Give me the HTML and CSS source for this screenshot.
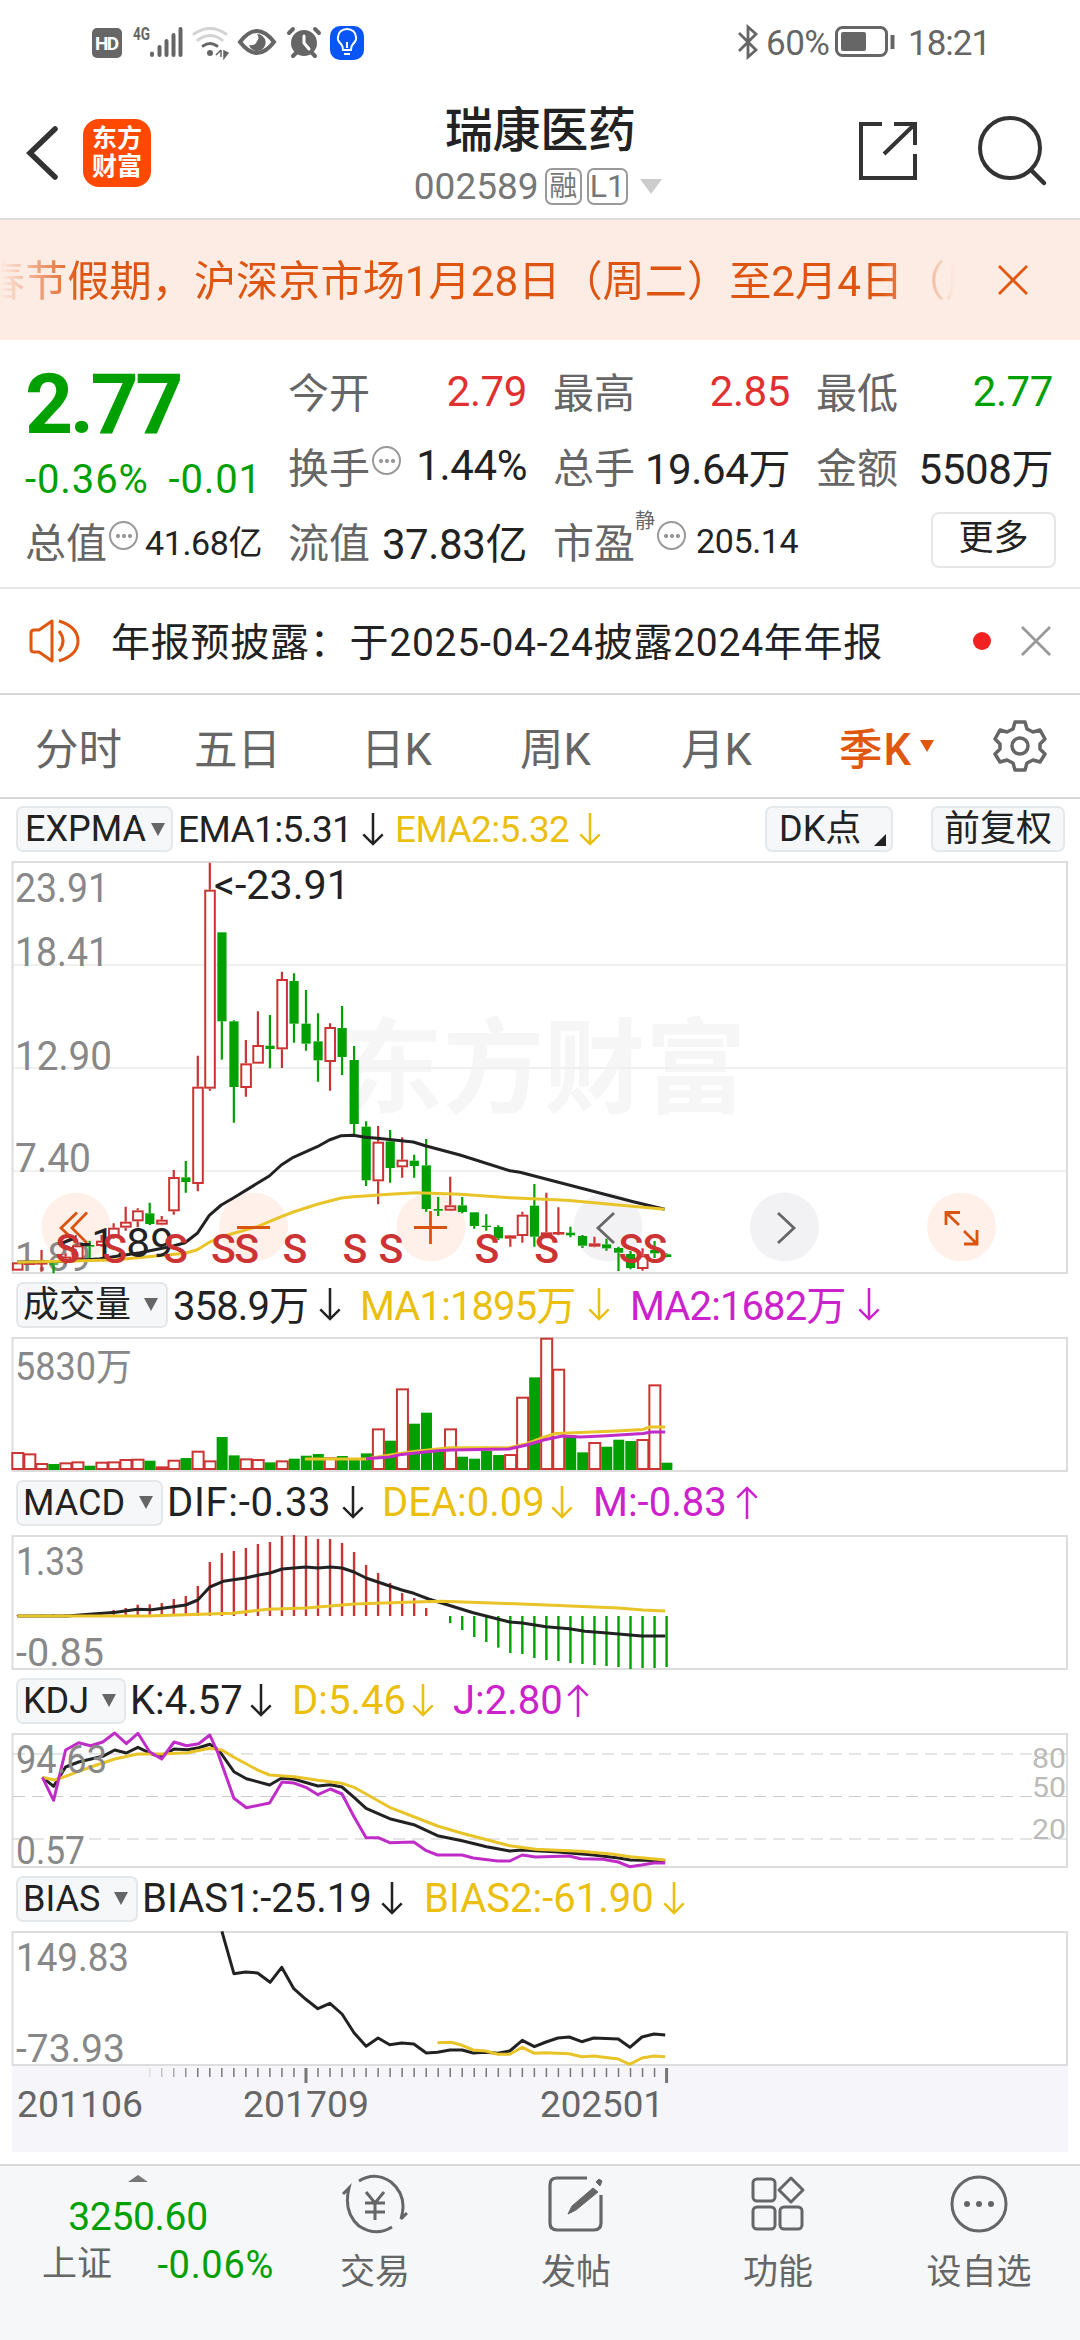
FILE: index.html
```
<!DOCTYPE html>
<html lang="zh-CN">
<head>
<meta charset="utf-8">
<title>瑞康医药 002589</title>
<link rel="stylesheet" href="styles.css">
</head>
<body>
<div class="status">
	<svg class="status-left" width="290" height="40" viewBox="84 22 290 40">
		<rect x="92" y="28" width="30" height="30" rx="5" fill="#666"/>
		<text x="95" y="50" class="hd" textLength="24">HD</text>
		<text x="133" y="40" class="net" textLength="17" lengthAdjust="spacingAndGlyphs">4G</text>
		<path d="M152 53.5v1.5M159.500 47v8M166.500 41v14M173.500 35v20M180.500 29v26" stroke="#666" stroke-width="4" stroke-linecap="round" fill="none"/>
		<g fill="none" stroke-width="3" stroke-linecap="round">
			<path d="M194 34q16 -11 32 0M198 40q12 -9 24 0" stroke="#d3d3d3"/>
			<path d="M203 46q7 -5 14 0" stroke="#666"/>
		</g>
		<circle cx="210" cy="53" r="3" fill="#666"/>
		<path d="M221 50v7M216 55l5 -5M224 51v7l4 -5z" stroke="#666" stroke-width="1.500" fill="#666"/>
		<path d="M240 42q17 -22 34 0q-17 22 -34 0z" fill="none" stroke="#666" stroke-width="4"/>
		<path d="M257 34a8.500 8.500 0 1 1 -8 11q7 1 8 -4q3 -3 0 -7z" fill="#666"/>
		<circle cx="304" cy="43" r="13" fill="#666"/>
		<path d="M289 33l4 -4M319 33l-4 -4M293 56l4 -4M315 56l-4 -4" stroke="#666" stroke-width="4" stroke-linecap="round"/>
		<path d="M304 36v7l5 6" stroke="#fff" stroke-width="3" fill="none" stroke-linecap="round"/>
		<rect x="330" y="26" width="34" height="34" rx="10" fill="#0a55f5"/>
		<path d="M343 50q0 -4 -2 -6q-4 -4 -3 -7a9 8 0 0 1 18 0q1 3 -3 7q-2 2 -2 6zM344 54h6M347 42v6" stroke="#fff" stroke-width="2" fill="none"/>
	</svg>
	<div class="status-right">
		<svg width="24" height="36" viewBox="0 0 24 36"><path d="M3 9l17 17l-8 7v-30l8 7l-17 17" fill="none" stroke="#666" stroke-width="2.800"/></svg>
		<span class="battery-text">60%</span>
		<svg width="62" height="32" viewBox="0 0 62 32">
			<rect x="1.500" y="1.500" width="50" height="28" rx="6" fill="none" stroke="#666" stroke-width="3"/>
			<rect x="6" y="6" width="25" height="19" rx="2" fill="#666"/>
			<path d="M57.500 9v14" stroke="#666" stroke-width="4"/>
		</svg>
		<span class="clock">18:21</span>
	</div>
</div>

<div class="header">
	<svg class="back" width="36" height="60" viewBox="0 0 36 60"><path d="M33 6L8 30l25 24" fill="none" stroke="#333" stroke-width="5.500" stroke-linecap="round"/></svg>
	<div class="logo"><span>东方</span><span>财富</span></div>
	<div class="title">
		<div class="name">瑞康医药</div>
		<div class="code"><span class="num">002589</span><span class="tag">融</span><span class="tag l1">L1</span><i class="down"></i></div>
	</div>
	<svg class="share" width="62" height="62" viewBox="0 0 62 62"><path d="M25 4H4v54h54V34M37 4h21v21M58 4L27 34" fill="none" stroke="#333" stroke-width="4"/></svg>
	<svg class="search" width="72" height="72" viewBox="0 0 72 72"><circle cx="33" cy="33" r="30" fill="none" stroke="#333" stroke-width="4"/><path d="M54 55l13 13" stroke="#333" stroke-width="4.500" stroke-linecap="round"/></svg>
</div>

<div class="notice">
	<div class="marquee">春节假期，沪深京市场1月28日（周二）至2月4日（周二）休市</div>
	<svg width="30" height="30" viewBox="0 0 30 30"><path d="M1 1l28 28M29 1L1 29" stroke="#e0570f" stroke-width="2.800"/></svg>
</div>

<div class="quote">
	<div class="price">2.77</div>
	<div class="cell"><label>今开</label><b class="red">2.79</b></div>
	<div class="cell"><label>最高</label><b class="red">2.85</b></div>
	<div class="cell"><label>最低</label><b class="green">2.77</b></div>
	<div class="change"><span>-0.36%</span><span>-0.01</span></div>
	<div class="cell"><label>换手<i class="more-dot"></i></label><b>1.44%</b></div>
	<div class="cell"><label>总手</label><b>19.64万</b></div>
	<div class="cell"><label>金额</label><b>5508万</b></div>
	<div class="cell"><label>总值<i class="more-dot"></i></label><b class="small">41.68亿</b></div>
	<div class="cell"><label>流值</label><b>37.83亿</b></div>
	<div class="cell"><label>市盈<sup>静</sup><i class="more-dot"></i></label><b class="small">205.14</b></div>
	<div class="cell end"><div class="more-btn">更多</div></div>
</div>

<div class="news">
	<svg width="52" height="46" viewBox="0 0 52 46" fill="none" stroke="#e0570f" stroke-width="3">
		<path d="M10 12h-5q-3 0 -3 3v16q0 3 3 3h5L23 43V3zM30 13q8 10 0 20M30 3q19 6 19 20t-19 20" stroke-linejoin="round"/>
	</svg>
	<div class="news-text">年报预披露：于2025-04-24披露2024年年报</div>
	<i class="dot"></i>
	<svg width="30" height="30" viewBox="0 0 30 30"><path d="M1 1l28 28M29 1L1 29" stroke="#999" stroke-width="2.800"/></svg>
</div>

<div class="tabs">
	<span>分时</span><span>五日</span><span>日K</span><span>周K</span><span>月K</span>
	<span class="on">季K<i></i></span>
	<svg width="54" height="54" viewBox="0 0 54 54" fill="none" stroke="#666" stroke-width="3.500" stroke-linejoin="round">
		<path d="M22 3h10l2 7l6 3l7 -2l5 9l-5 5v5l5 5l-5 8l-7 -2l-6 3l-2 7h-10l-2 -7l-6 -3l-7 2l-5 -8l5 -5v-5l-5 -5l5 -9l7 2l6 -3z"/><circle cx="27" cy="27" r="8"/>
	</svg>
</div>

<div class="bar bar-main">
	<div class="pick">EXPMA<i></i></div>
	<div class="read"><span>EMA1:5.31</span><svg class="arrow"><use href="#down"/></svg></div>
	<div class="read yellow"><span>EMA2:5.32</span><svg class="arrow"><use href="#down"/></svg></div>
	<div class="pick dk">DK点<i></i></div>
	<div class="pick fq">前复权</div>
</div>
<svg class="chart" id="kline" width="1056" height="413"></svg>

<div class="bar bar-vol">
	<div class="pick">成交量<i></i></div>
	<div class="read"><span>358.9万</span><svg class="arrow"><use href="#down"/></svg></div>
	<div class="read yellow"><span>MA1:1895万</span><svg class="arrow"><use href="#down"/></svg></div>
	<div class="read purple"><span>MA2:1682万</span><svg class="arrow"><use href="#down"/></svg></div>
</div>
<svg class="chart" id="vol" width="1056" height="135"></svg>

<div class="bar bar-macd">
	<div class="pick">MACD<i></i></div>
	<div class="read"><span>DIF:-0.33</span><svg class="arrow"><use href="#down"/></svg></div>
	<div class="read yellow"><span>DEA:0.09</span><svg class="arrow"><use href="#down"/></svg></div>
	<div class="read purple"><span>M:-0.83</span><svg class="arrow"><use href="#up"/></svg></div>
</div>
<svg class="chart" id="macd" width="1056" height="135"></svg>

<div class="bar bar-kdj">
	<div class="pick">KDJ<i></i></div>
	<div class="read"><span>K:4.57</span><svg class="arrow"><use href="#down"/></svg></div>
	<div class="read yellow"><span>D:5.46</span><svg class="arrow"><use href="#down"/></svg></div>
	<div class="read purple"><span>J:2.80</span><svg class="arrow"><use href="#up"/></svg></div>
</div>
<svg class="chart" id="kdj" width="1056" height="135"></svg>

<div class="bar bar-bias">
	<div class="pick">BIAS<i></i></div>
	<div class="read"><span>BIAS1:-25.19</span><svg class="arrow"><use href="#down"/></svg></div>
	<div class="read yellow"><span>BIAS2:-61.90</span><svg class="arrow"><use href="#down"/></svg></div>
</div>
<svg class="chart" id="bias" width="1056" height="135"></svg>
<svg class="chart axis" id="axis" width="1056" height="86"></svg>

<div class="footer">
	<div class="index">
		<i></i>
		<div class="index-value">3250.60</div>
		<div class="index-row"><span>上证</span><em>-0.06%</em></div>
	</div>
	<div class="item">
		<svg width="66" height="60" viewBox="0 0 66 60" fill="none" stroke="#666" stroke-width="3">
			<path d="M17 7Q33 -3 49 8Q66 22 59 45L65 39M50 53Q34 63 17 52Q1 38 7 14L1 20"/>
			<path d="M24 18l9 11l9 -11M23 29h20M23 38h20M33 29v17"/>
		</svg>
		<span>交易</span>
	</div>
	<div class="item">
		<svg width="58" height="60" viewBox="0 0 58 60" fill="none" stroke="#666" stroke-width="3.200">
			<path d="M40 4H10q-7 0 -7 7v38q0 7 7 7h37q7 0 7 -7V21"/>
			<path d="M46 14l5 4L29 36l-8 4l4 -8zM49 8l3 -3l3 2l-2 5z" fill="#666" stroke-width="1"/>
		</svg>
		<span>发帖</span>
	</div>
	<div class="item">
		<svg width="56" height="60" viewBox="0 0 56 60" fill="none" stroke="#666" stroke-width="3">
			<rect x="3" y="5" width="22" height="22" rx="4"/><rect x="3" y="33" width="22" height="22" rx="4"/><rect x="30" y="33" width="22" height="22" rx="4"/>
			<path d="M41 4l12 12l-12 12l-12 -12z" stroke-linejoin="round"/>
		</svg>
		<span>功能</span>
	</div>
	<div class="item">
		<svg width="58" height="60" viewBox="0 0 58 60">
			<circle cx="29" cy="30" r="27" fill="none" stroke="#666" stroke-width="3"/>
			<g fill="#666"><circle cx="17" cy="30" r="3"/><circle cx="29" cy="30" r="3"/><circle cx="41" cy="30" r="3"/></g>
		</svg>
		<span>设自选</span>
	</div>
</div>

<svg class="defs" width="0" height="0">
	<symbol id="down" viewBox="0 0 22 34"><path d="M11 0v32M1 22l10 10l10 -10" fill="none" stroke="currentColor" stroke-width="2.600"/></symbol>
	<symbol id="up" viewBox="0 0 22 34"><path d="M11 34v-32M1 12l10 -10l10 10" fill="none" stroke="currentColor" stroke-width="2.600"/></symbol>
</svg>
<script src="chart.js"></script>
</body>
</html>
```
FILE: styles.css
```
* {box-sizing: border-box;}
body {
	margin: 0;
	width: 1080px;
	height: 2340px;
	overflow: hidden;
	background: #fff;
	color: #222;
	font-family: Roboto, "Noto Sans CJK SC", sans-serif;
}
i, em {font-style: normal;}
svg {display: block; flex: none;}
.defs {position: absolute;}

/* status bar */
.status {
	display: flex;
	justify-content: space-between;
	height: 84px;
	padding: 22px 88px 0 84px;
}
.hd {font: bold 19px Roboto; fill: #fff;}
.net {font: bold 18px Roboto; fill: #666;}
.status-right {display: flex; align-items: center; height: 40px; color: #666; font-size: 35px;}
.status-right span {position: relative; top: 1px;}
.battery-text {width: 75px; padding-left: 6px; letter-spacing: -.5px;}
.clock {width: 84px; margin-left: 11px; letter-spacing: -1px;}

/* header */
.header {
	display: flex;
	align-items: center;
	height: 136px;
	padding: 0 31px 0 22px;
	border-bottom: 2px solid #ddd;
}
.back {margin-top: 3px;}
.logo {
	display: flex;
	flex-direction: column;
	justify-content: center;
	align-items: center;
	width: 68px;
	height: 68px;
	margin: 3px 0 0 25px;
	border-radius: 16px;
	background: #ff4800;
	color: #fff;
	font-size: 25px;
	font-weight: 700;
	line-height: 28px;
}
.title {width: 300px; margin-left: 243px;}
.name {height: 70px; padding-left: 51px; font-size: 48px; line-height: 81px; font-weight: 500; letter-spacing: -.3px;}
.code {display: flex; align-items: center; height: 52px; padding-left: 20px; color: #777;}
.code .num {width: 131px; font-size: 37px;}
.tag {
	width: 37px;
	height: 37px;
	border: 2px solid #999;
	border-radius: 7px;
	font-size: 28px;
	line-height: 33px;
	text-align: center;
}
.l1 {width: 41px; margin-left: 5px; font-size: 32px;}
.down {margin-left: 12px; border: 11px solid transparent; border-top: 15px solid #ccc; border-bottom: 0;}
.share {margin: 0 58px 0 164px;}

.notice {
	display: flex;
	align-items: center;
	justify-content: space-between;
	height: 120px;
	padding-right: 52px;
	background: #fdece4;
}
.marquee {
	width: 960px;
	margin-top: -5px;
	overflow: hidden;
	text-indent: -17px;
	white-space: nowrap;
	color: #dd5510;
	font-size: 42.200px;
	-webkit-mask-image: linear-gradient(90deg, transparent, #000 80px, #000 880px, transparent 955px);
	mask-image: linear-gradient(90deg, transparent, #000 80px, #000 880px, transparent 955px);
}

/* quote grid */
.quote {
	display: grid;
	grid-template-columns: 237px 239px 237px 237px;
	grid-template-rows: 75px 75px 75px;
	column-gap: 26px;
	height: 249px;
	padding: 13px 25px 0;
	border-bottom: 2px solid #e8e8e8;
}
.price {font-size: 84px; font-weight: 700; line-height: 104px; color: #00a000; letter-spacing: -3.500px;}
.change {display: flex; justify-content: space-between; padding: 14px 0 0 0; font-size: 40px; line-height: 76px; color: #00a000; letter-spacing: .9px;}
.cell {display: flex; justify-content: space-between; align-items: center; white-space: nowrap;}
.cell label {display: flex; align-items: center; color: #666; font-size: 41px; margin-top: -2px;}
.cell b {font-weight: 400; font-size: 42px; color: #222; letter-spacing: -.4px;}
.cell b.small {font-size: 34px;}
.cell b.red {color: #e03030; margin-top: 2px;}
.cell b.green {color: #00a000; margin-top: 2px;}
.cell.end {justify-content: flex-end;}
.cell sup {align-self: flex-start; font-size: 20px; line-height: 20px; margin-top: 1px;}
.cell sup + .more-dot {margin-right: 10px;}
.more-dot {
	width: 29px;
	height: 29px;
	margin: -8px 0 0 2px;
	border: 2px solid #999;
	border-radius: 50%;
	background: radial-gradient(circle at 50% 50%, #999 1.800px, transparent 2.300px) 3.500px 50% / 6px 6px no-repeat,
		radial-gradient(circle at 50% 50%, #999 1.800px, transparent 2.300px) 9.500px 50% / 6px 6px no-repeat,
		radial-gradient(circle at 50% 50%, #999 1.800px, transparent 2.300px) 15.500px 50% / 6px 6px no-repeat;
}
.more-btn {
	width: 125px;
	height: 56px;
	margin: -1px -3px 0 0;
	border: 2px solid #e6e6e6;
	border-radius: 8px;
	font-size: 35px;
	line-height: 50px;
	text-align: center;
}

.news {
	display: flex;
	align-items: center;
	height: 106px;
	padding: 0 28px 0 29px;
	border-bottom: 2px solid #d8d8d8;
}
.news-text {width: 862px; margin: -4px 0 0 30px; font-size: 39px; letter-spacing: .75px;}
.dot {width: 18px; height: 18px; margin-right: 30px; border-radius: 50%; background: #f22222;}

.tabs {
	display: grid;
	grid-template-columns: 159px 167px 159px 161px 158px 154px 54px;
	align-items: center;
	height: 104px;
	padding-left: 35px;
	border-bottom: 2px solid #d8d8d8;
	color: #666;
	font-size: 43.500px;
}
.tabs .on {display: flex; align-items: center; color: #e0570f; font-weight: 500; letter-spacing: 1px;}
.tabs .on i {margin-left: 8px; border: 7px solid transparent; border-top: 12px solid #e0570f; border-bottom: 0;}

/* indicator bars */
.bar {display: grid; align-items: center; height: 63px; padding: 0 0 2px 16px; font-size: 40px;}
.bar-main {grid-template-columns: 162px 217px 370px 166px 133px; height: 62px; font-size: 37px;}
.bar-vol {grid-template-columns: 157px 187px 270px 248px;}
.bar-macd {grid-template-columns: 151px 215px 211px 165px;}
.bar-kdj {grid-template-columns: 114px 162px 161px 134px;}
.bar-bias {grid-template-columns: 126px 282px 260px;}
.read {display: flex; align-items: center; justify-content: space-between; white-space: nowrap;}
.bar-main .read {width: 206px; letter-spacing: -.6px;}
.bar-vol .read {letter-spacing: -.9px;}
.bar-vol .read span {margin-top: -3px;}
.bar-vol .read:nth-child(2) {width: 168px;}
.bar-vol .read:nth-child(3) {width: 250px;}
.bar-vol .read:nth-child(4) {width: 250px;}
.bar-macd .read:nth-child(2) {width: 197px; letter-spacing: .7px;}
.bar-macd .read:nth-child(3) {width: 191px;}
.bar-kdj .read:nth-child(2) {width: 142px;}
.bar-kdj .read:nth-child(3) {width: 142px;}
.bar-kdj .read:nth-child(4) {width: 136px;}
.bar-bias .read {width: 261px;}
.arrow {width: 22px; height: 33px;}
.yellow {color: #eabf10;}
.purple {color: #cc22cc;}
.pick {
	display: flex;
	align-items: center;
	justify-content: space-between;
	height: 46px;
	width: 157px;
	padding: 0 8px 0 5px;
	border: 2px solid #e4e8ea;
	border-radius: 7px;
	background: #f5f7f9;
	font-size: 36px;
	line-height: 40px;
	white-space: nowrap;
}
.pick i {border: 7px solid transparent; border-top: 13px solid #666; border-bottom: 0;}
.bar-vol .pick {width: 152px;}
.bar-macd .pick {width: 147px;}
.bar-kdj .pick {width: 110px;}
.bar-bias .pick {width: 122px;}
.bar .dk {width: 128px; padding: 0 5px 0 12px;}
.bar .fq {width: 134px; padding: 0 11px;}
.dk i {align-self: flex-end; margin-bottom: 4px; border: 6px solid #222; border-top-color: transparent; border-left-color: transparent;}
.bar-main .pick:first-child {padding: 0 6px 0 7px;}

.chart {margin-left: 12px; overflow: visible;}
.chart text {fill: #888; font-size: 38px;}
.chart text.mark {fill: #222; font-size: 41px;}
.chart text.big {font-size: 41px;}
.chart text.sell {fill: #cc3333; font-size: 41px; font-weight: 500; text-anchor: middle;}
.chart text.level {fill: #bbb; font-size: 28px;}
.chart text.water {fill: #f6f6f6; font-size: 103px; font-weight: 700;}
.axis {margin-bottom: 12px; background: #f6f6fa;}
.chart.axis text {fill: #666; font-size: 37px;}

/* bottom bar */
.footer {
	display: grid;
	grid-template-columns: 276px 198px 204px 200px 202px;
	height: 177px;
	border-top: 2px solid #d8d8d8;
	background: #f5f7f9;
	color: #666;
}
.item {display: flex; flex-direction: column; align-items: center; padding-top: 8px; font-size: 35px; line-height: 50px;}
.item span {margin-top: 14px;}
.index {text-align: center;}
.index i {display: block; width: 20px; margin: 9px auto 0; border: 10px solid transparent; border-bottom: 7px solid #777; border-top: 0;}
.index-value {font-size: 39px; line-height: 46px; margin-top: 12px; color: #00a000; letter-spacing: -.3px;}
.index-row {display: flex; justify-content: space-between; padding: 0 2px 0 42px; font-size: 35px; line-height: 50px;}
.index-row em {color: #00a000; font-size: 38px; letter-spacing: .7px;}
```
FILE: chart.js
```
var RED = '#cc3333', GREEN = '#00a000', BLACK = '#222', YELLOW = '#e8c428', PURPLE = '#c02cc8';
var FIRST = 5.5, STEP = 12.02;

function el(parent, name, attrs, text) {
	var n = document.createElementNS('http://www.w3.org/2000/svg', name);
	for (var k in attrs) n.setAttribute(k, attrs[k]);
	if (text) n.textContent = text;
	parent.appendChild(n);
	return n;
}
function svg(id) { return document.getElementById(id); }
function cx(i) { return FIRST + STEP * i; }
function frame(s, h) {
	el(s, 'rect', {x: .5, y: 1, width: 1054.5, height: h - 2, fill: 'none', stroke: '#ddd', 'stroke-width': 2});
}
// points are "x,y x,y" in plot units
function line(s, pts, color, sx, top) {
	var d = pts.split(' ').map(function (p) {
		var a = p.split(',');
		return (a[0] / sx - 12).toFixed(1) + ',' + (a[1] / 3 - top).toFixed(1);
	}).join(' ');
	el(s, 'polyline', {points: d, fill: 'none', stroke: color, 'stroke-width': 3, 'stroke-linejoin': 'round'});
}
function label(s, x, y, w, text, cls) {
	el(s, 'text', {x: x, y: y, textLength: w, lengthAdjust: 'spacingAndGlyphs', 'class': cls || ''}, text);
}

// ---- k line: colour, high, body top, body bottom, low
var candles = [
	'r',1237,1237,1262,1262, 'r',1236,1237,1240,1240, 'r',1200,1236,1241,1265, 'g',1238,1240,1244,1270, 'r',1210,1220,1238,1242,
	'r',1180,1186,1228,1232, 'g',1172,1185,1190,1225, 'r',1155,1172,1188,1190, 'r',1120,1133,1160,1166, 'r',1070,1115,1133,1142,
	'r',1075,1081,1114,1132, 'g',1058,1090,1122,1125, 'r',1098,1109,1124,1126, 'r',960,981,1084,1094, 'g',933,982,996,1028,
	'r',617,710,1002,1024, 'r',38,119,716,722, 'g',247,247,514,629, 'g',511,514,711,818, 'r',570,640,714,740,
	'r',484,585,641,641, 'g',495,587,597,655, 'r',365,387,598,654, 'g',370,393,521,578, 'g',420,521,581,602,
	'g',490,574,631,695, 'r',520,531,636,722, 'g',468,534,621,675, 'g',588,630,822,853, 'g',814,830,991,1008,
	'r',828,875,994,1063, 'g',840,874,954,998, 'r',862,929,952,983, 'g',914,932,948,983, 'g',867,946,1077,1085,
	'g',1041,1077,1082,1098, 'r',980,1066,1082,1083, 'g',1041,1066,1086,1090, 'g',1086,1087,1128,1136, 'g',1093,1127,1131,1142,
	'g',1126,1131,1165,1170, 'r',1155,1156,1166,1190, 'r',1085,1094,1158,1178, 'g',1002,1067,1160,1190, 'r',1028,1147,1158,1165,
	'r',1072,1146,1153,1156, 'g',1130,1148,1156,1162, 'g',1155,1158,1187,1194, 'r',1160,1180,1190,1192, 'g',1166,1183,1195,1202,
	'g',1190,1194,1208,1263, 'g',1203,1212,1254,1258, 'r',1195,1216,1257,1262, 'g',1173,1200,1210,1224, 'g',1210,1213,1221,1222
];
var k = svg('kline');
[104, 207, 310].forEach(function (y) {
	el(k, 'path', {d: 'M1 ' + y + 'H1055', stroke: '#f0f0f0', 'stroke-width': 2});
});
label(k, 330, 244, 404, '东方财富', 'water');
el(k, 'path', {d: 'M1 207H1055', stroke: '#f0f0f0', 'stroke-width': 2});
frame(k, 413);
[[64, 1], [241.5, 1], [419, 1], [596, 0], [772.5, 0], [949.5, 1]].forEach(function (b) {
	el(k, 'circle', {cx: b[0], cy: 366, r: 34.5, fill: b[1] ? '#fff0ea' : '#f2f2f4'});
});
function icon(d, c) { el(k, 'path', {d: d, fill: 'none', stroke: c, 'stroke-width': 2.8}); }
label(k, 3, 41, 94, '23.91', 'big');
label(k, 3, 105, 94, '18.41', 'big');
label(k, 3, 209, 97, '12.90', 'big');
label(k, 3, 311, 76, '7.40', 'big');
label(k, 3, 410, 76, '1.89', 'big');
for (var i = 0; i < 55; i++) {
	var c = candles.slice(i * 5, i * 5 + 5).map(function (v, n) { return n ? v / 3 - 11 : v; });
	var col = c[0] == 'r' ? RED : GREEN, x = cx(i);
	el(k, 'path', {d: 'M' + x + ' ' + c[1] + 'V' + c[2] + 'M' + x + ' ' + c[3] + 'V' + c[4], stroke: col, 'stroke-width': 2.2});
	if (c[0] == 'r') el(k, 'rect', {x: x - 4.6, y: c[2] + 1, width: 9.6, height: Math.max(c[3] - c[2] - 2, .6), fill: '#fff', stroke: col, 'stroke-width': 2});
	else el(k, 'rect', {x: x - 4.5, y: c[2], width: 9.2, height: c[3] - c[2], fill: col});
}
line(k, '52,1236 200,1234 300,1226 420,1208 520,1188 555,1178 592,1150 628,1096 664,1065 700,1044 808,978 844,945 880,922 952,890 988,870 1024,857 1060,856 1096,862 1132,865 1240,876 1276,887 1380,915 1530,962 1560,967 1900,1055 1994,1078', BLACK, 3, 11);
line(k, '52,1237 340,1230 500,1215 556,1210 592,1199 628,1177 664,1160 772,1130 844,1100 880,1086 952,1063 1024,1044 1060,1040 1096,1038 1168,1033 1250,1028 1380,1033 1530,1043 1700,1051 1994,1078', YELLOW, 3, 11);
icon('M65 351.500L49 367L65 382M75 351.500L60 367L75 382', '#d9540f');
icon('M225 366.500H258', '#d9540f');
icon('M402 366.500H435M418.500 350V383', '#d9540f');
icon('M602 352L586 367L602 382', '#666');
icon('M766 352L782 367L766 382', '#666');
icon('M934 364V351.500H948M934 351.500L947 364M952 370L965 383M952 383H965V369', '#d9540f');
label(k, 202, 38, 136, '<-23.91', 'mark');
label(k, 46, 396, 116, '<-1.89', 'mark');
[203, 344, 526, 670, 740, 885, 1065, 1173, 1461, 1640, 1893, 1965].forEach(function (x) {
	el(k, 'text', {x: x / 3 - 12, y: 402, 'class': 'sell'}, 'S');
});

// ---- volume
var v = svg('vol');
var vols = 'r547 r551 r580 g583 r578 r575 g588 r576 r575 r568 r567 g573 r590 r570 g565 r543 r572 g502 g557 r566 r568 g578 r572 g567 g558 g553 r563 g559 g571 g551 r476 g513 r356 g462 g429 g540 r476 g561 g567 g544 g556 r553 r381 g323 r204 r297 g497 g548 r517 g531 g510 g514 r508 r344 g579'.split(' ');
frame(v, 135);
label(v, 3, 43, 117, '5830万');
vols.forEach(function (s, i) {
	var y = s.slice(1) / 3 - 67.3, b = 133;
	if (s[0] == 'r') el(v, 'rect', {x: cx(i) - 5.2, y: y + 1, width: 11, height: Math.max(b - y - 2, 1), fill: '#fff', stroke: RED, 'stroke-width': 2});
	else el(v, 'rect', {x: cx(i) - 5.2, y: y, width: 11, height: b - y, fill: GREEN});
});
line(v, '683,568 820,568 873,556 927,545 1007,534 1140,534 1180,522 1220,502 1245,491 1300,488 1380,484 1440,479 1455,472 1490,472', YELLOW, 2.24, 67.3);
line(v, '820,567 873,562 900,554 980,543 1010,541 1140,538 1180,526 1220,510 1260,499 1300,502 1360,498 1440,491 1460,487 1490,487', PURPLE, 2.24, 67.3);

// ---- macd
var m = svg('macd');
frame(m, 135);
label(m, 4, 40, 69, '1.33');
label(m, 4, 131, 88, '-0.85');
[406, 405, 404, 403, 403, 402, 401, 398, 390, 384, 374, 373, 369, 357, 348, 318, 246, 219, 213, 204, 192, 186, 168, 165, 168, 177, 177, 189, 216, 255, 279, 309, 339, 354, 384, 408, 429, 450, 471, 486, 503, 519, 522, 534, 540, 543, 549, 552, 555, 558, 561, 567, 564, 564, 561].forEach(function (y, i) {
	el(m, 'path', {d: 'M' + cx(i) + ' 81V' + (y / 3 - 55), stroke: y < 408 ? RED : GREEN, 'stroke-width': 2.4});
});
line(m, '39,408 150,408 200,403 260,397 308,388 340,389 416,375 443,360 470,321 500,304 550,294 580,285 605,279 632,267 658,264 685,261 712,264 740,261 766,264 793,276 820,294 873,318 900,330 927,340 960,357 1060,398 1115,417 1142,426 1170,429 1223,440 1275,446 1310,454 1360,459 1437,468 1490,468', BLACK, 2.24, 55);
line(m, '39,408 330,408 520,400 600,388 685,384 793,372 927,366 990,364 1120,370 1225,375 1385,384 1440,390 1490,393', YELLOW, 2.24, 55);

// ---- kdj
var j = svg('kdj');
frame(j, 135);
[21, 63.5, 106].forEach(function (y) {
	el(j, 'path', {d: 'M1 ' + y + 'H1055', stroke: '#ccc', 'stroke-width': 1.2, 'stroke-dasharray': '12 7'});
});
label(j, 1020, 35, 34, '80', 'level');
label(j, 1020, 64, 34, '50', 'level');
label(j, 1020, 106, 34, '20', 'level');
line(j, '95,322 120,349 147,291 176,276 230,259 257,240 283,249 309,232 340,252 360,260 390,237 420,239 445,233 470,223 490,240 524,305 552,326 604,345 630,325 660,328 712,348 740,344 766,351 793,382 820,415 873,446 927,464 980,497 1035,512 1090,530 1142,543 1170,540 1250,546 1330,555 1385,564 1412,570 1490,572', BLACK, 2.24, 63);
line(j, '95,322 122,330 147,319 176,304 203,291 257,267 309,252 360,252 420,248 470,235 497,240 524,262 580,302 604,315 660,320 712,331 766,340 793,352 873,412 980,468 1035,490 1142,527 1200,538 1300,544 1370,552 1412,560 1490,570', YELLOW, 2.24, 63);
line(j, '95,322 120,391 147,240 176,218 203,227 230,216 257,189 283,221 309,190 335,245 362,267 390,216 418,227 445,221 470,195 487,245 524,385 552,413 604,399 632,336 658,339 685,352 712,374 740,357 766,372 793,440 820,503 847,503 873,518 927,516 955,542 980,555 1035,555 1060,564 1115,573 1142,573 1170,555 1200,561 1275,558 1300,566 1350,568 1385,576 1410,590 1437,585 1464,579 1490,579', PURPLE, 2.24, 63);
label(j, 4, 40, 91, '94.63');
label(j, 4, 131, 69, '0.57');

// ---- bias
var b = svg('bias');
frame(b, 135);
label(b, 4, 40, 113, '149.83');
label(b, 4, 131, 109, '-73.93');
line(b, '497,184 524,311 550,306 577,309 605,337 631,292 658,356 685,388 712,416 739,400 766,432 793,488 820,529 847,504 873,524 900,519 927,522 955,549 980,547 1008,540 1035,540 1060,549 1088,547 1115,550 1142,543 1170,511 1197,530 1223,516 1250,504 1275,501 1303,515 1330,504 1385,507 1411,532 1438,501 1465,492 1490,495', BLACK, 2.24, 61);
line(b, '980,518 1010,517 1035,526 1060,540 1088,543 1115,553 1142,553 1170,532 1197,550 1223,548 1275,551 1303,560 1330,558 1385,567 1410,583 1438,564 1465,558 1490,560', YELLOW, 2.24, 61);

// ---- time axis
var a = svg('axis');
for (i = 11; i < 55; i++) {
	var major = i == 24 || i == 54;
	el(a, 'path', {d: 'M' + cx(i) + ' 2v' + (major ? 15 : 9), stroke: '#777', 'stroke-width': major ? 3 : 1.5, opacity: Math.min(1, (i - 10) / 5)});
}
label(a, 5, 51, 126, '201106');
label(a, 231, 51, 126, '201709');
label(a, 528, 51, 124, '202501');
```
